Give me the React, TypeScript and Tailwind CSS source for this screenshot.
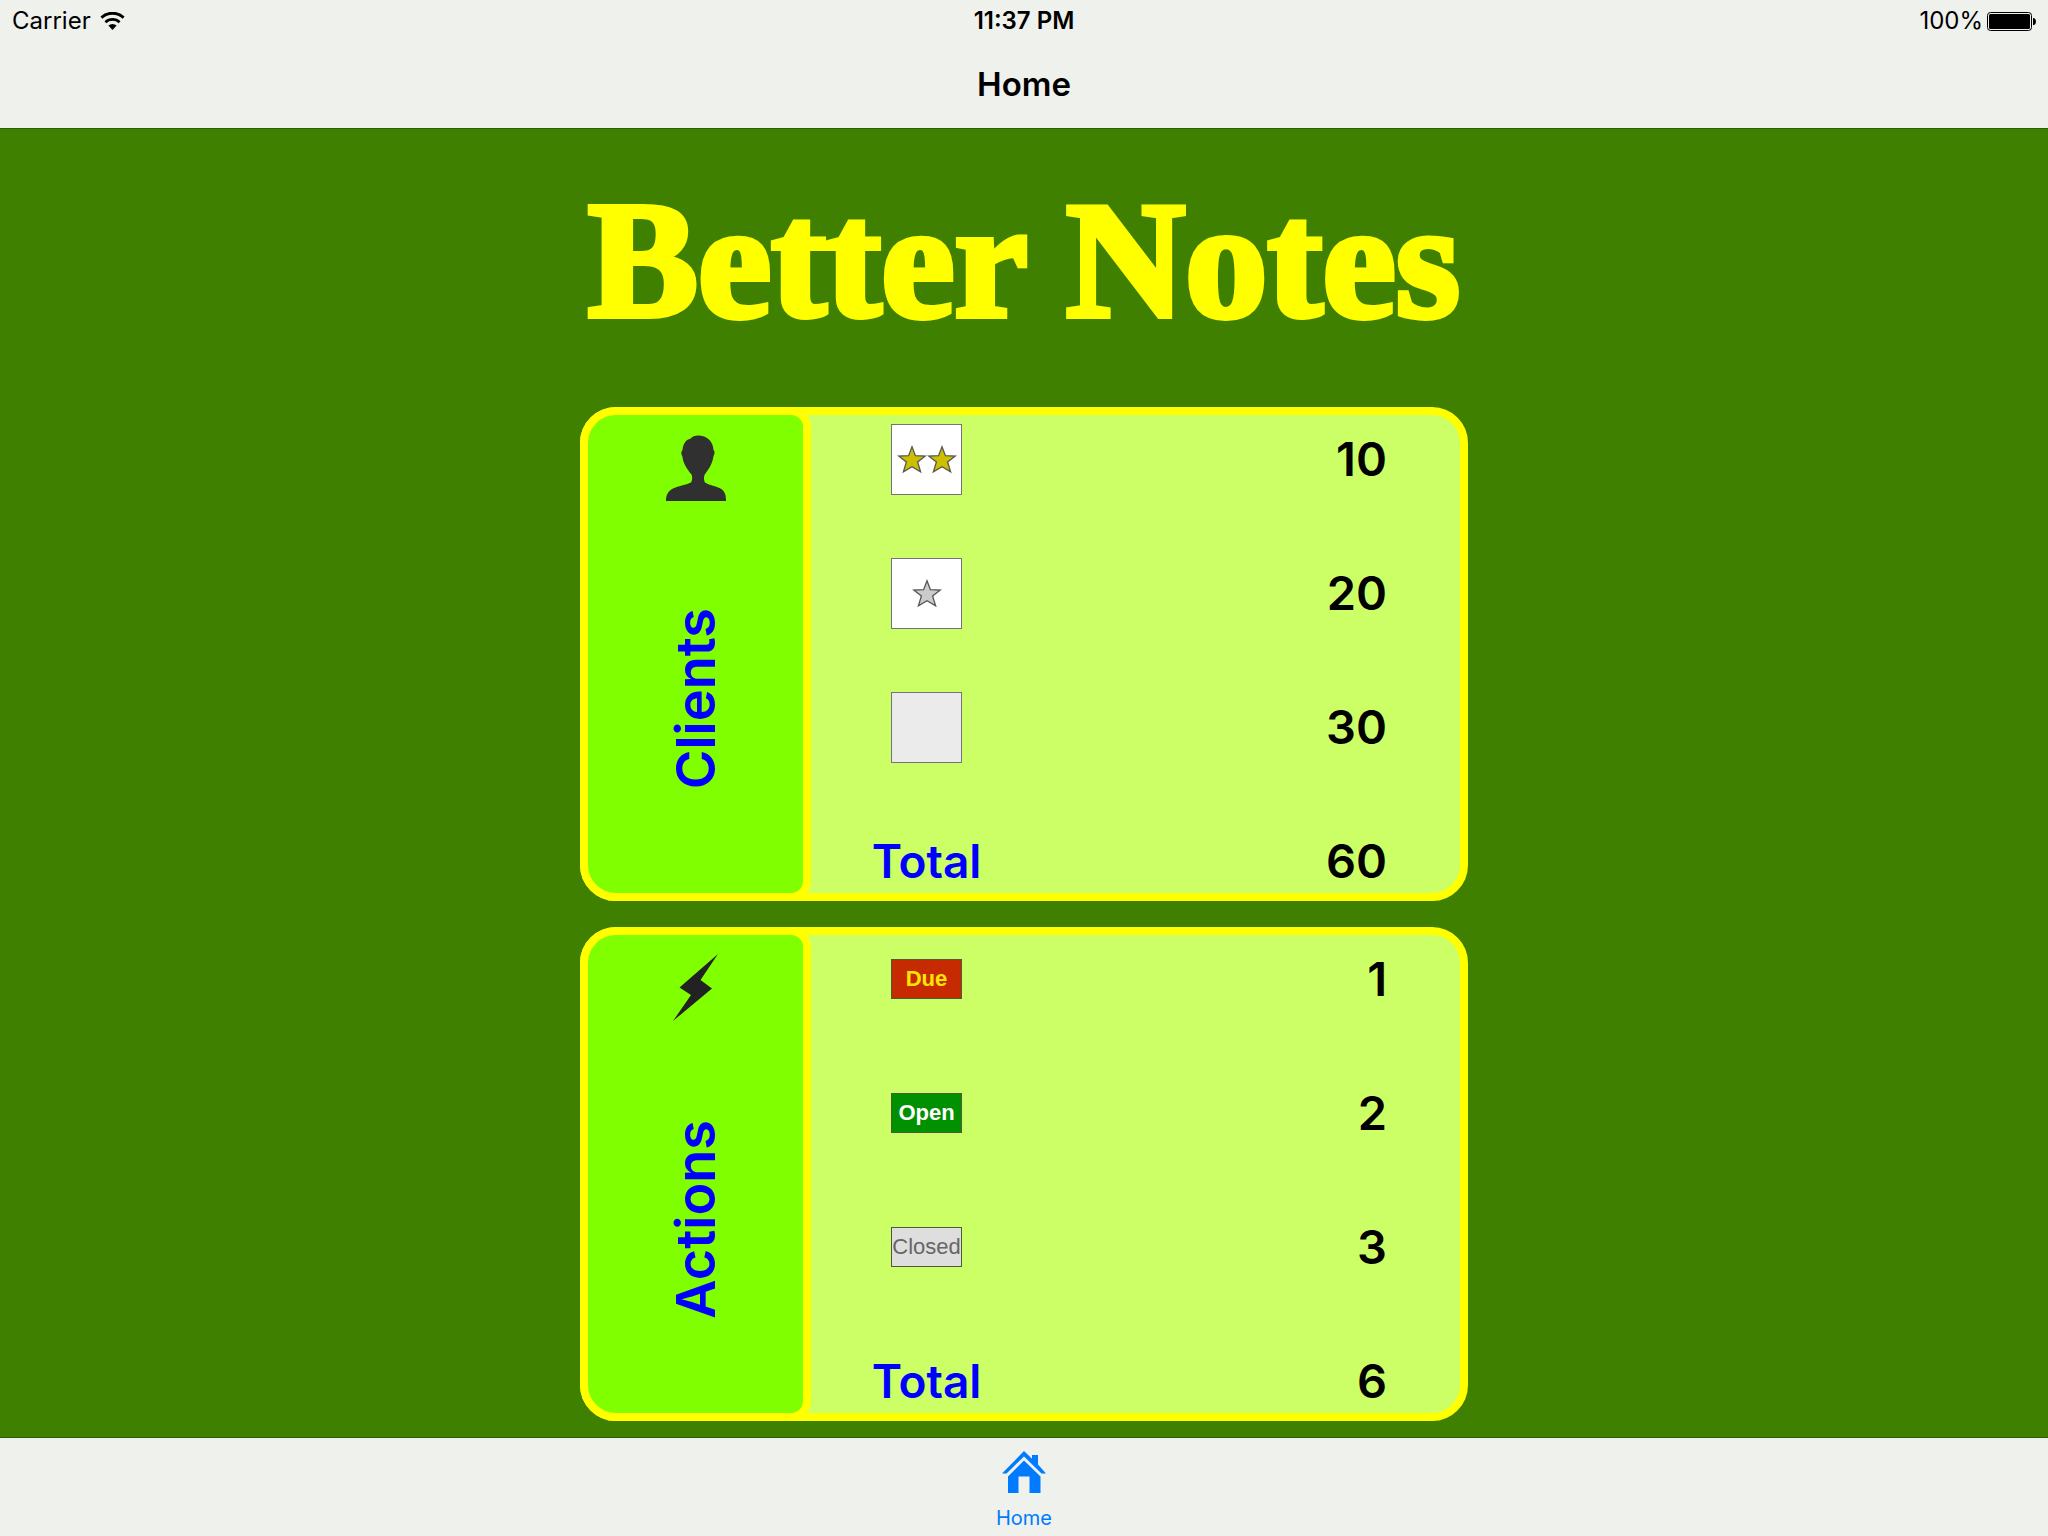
import type { ReactNode } from "react";

type Row = { label: string; mark: ReactNode; value: number };

function WifiIcon() {
  return (
    <svg viewBox="0 0 25 18" className="h-[18px] w-[25px]" aria-hidden="true">
      <path d="M1.4 5.6A16.2 16.2 0 0 1 23.6 5.6" fill="none" stroke="#000" strokeWidth="2.9" />
      <path d="M5.4 10.2A10.4 10.4 0 0 1 19.6 10.2" fill="none" stroke="#000" strokeWidth="2.7" />
      <path d="M8.4 13.5A6 6 0 0 1 16.6 13.5L12.5 18Z" />
    </svg>
  );
}

function BatteryIcon() {
  return (
    <svg viewBox="0 0 49 19" className="h-[19px] w-[49px]" aria-hidden="true">
      <rect x="0.5" y="0.5" width="44" height="18" rx="3" fill="none" stroke="#000" />
      <rect x="2" y="2" width="41" height="15" rx="1.5" />
      <path d="M46 6h1q2 1 2 3.5t-2 3.500h-1z" />
    </svg>
  );
}

function PersonIcon() {
  return (
    <svg viewBox="0 0 60 66" className="h-[66px] w-[60px]" fill="#303030" aria-hidden="true">
      <path d="M32 0.500C41 0.500 47 6 47.500 15C48.800 16 49 19 47.500 21C46.500 29 42 35 38.500 40C37.500 43 38 45.500 39 47.500C43 50 49 51 54.500 53.500C59 56 60 60 60 66H0C0 60 2 56 7 53.500C12 51 20 50 25 47.500C26.500 45 26.500 42 25.500 39.500C21 34 17 28 16.500 22C14.800 19 15 16.500 16.500 15C17 9 20 4.500 24 4C26 1.500 29 0.500 32 0.500Z" />
    </svg>
  );
}

function BoltIcon() {
  return (
    <svg viewBox="0 0 45 67" className="h-[67px] w-[45px]" fill="#222" aria-hidden="true">
      <path d="M45 0L27.500 26L39 34.500L0 67L18 41L6.500 33.500Z" />
    </svg>
  );
}

function HomeIcon() {
  return (
    <svg viewBox="0 0 44 42" className="h-[42px] w-11" fill="#007aff" aria-hidden="true">
      <path d="M22 0L30 7.800V4H36V13.600L44 22.500H39.500L22 5.500L4.500 22.500H0Z" />
      <path d="M22 9.500L38.500 25.500V42H27.500V25.500H16.500V42H6V25.500Z" />
    </svg>
  );
}

function Star({ fill }: { fill: string }) {
  return (
    <svg viewBox="0 0 30 29" className="h-[29px] w-[30px]" aria-hidden="true">
      <path
        d="M15 1.800L18.400 10.700L28.300 11.100L20.600 17L23.600 26.900L15 21.700L6.400 26.900L9.400 17L1.700 11.100L11.600 10.700Z"
        fill={fill}
        stroke="#555"
        strokeWidth="1.300"
      />
    </svg>
  );
}

function RatingBox({ stars = 0, tone }: { stars?: number; tone: "gold" | "silver" | "none" }) {
  return (
    <span
      className={`mx-auto flex h-[71px] w-[71px] items-center justify-center border border-[#77707f] ${
        tone === "none" ? "bg-[#ebebeb]" : "bg-white"
      }`}
    >
      {Array.from({ length: stars }, (_, i) => (
        <Star key={i} fill={tone === "gold" ? "#cdc000" : "#cbcbcb"} />
      ))}
    </span>
  );
}

function StatusBadge({ className, children }: { className: string; children: ReactNode }) {
  return (
    <span
      className={`mx-auto flex h-10 w-[71px] items-center justify-center border border-[#4f5a3c] font-['Liberation_Sans',sans-serif] text-[22px] leading-6 ${className}`}
    >
      {children}
    </span>
  );
}

const clients: Row[] = [
  { label: "Two stars", mark: <RatingBox stars={2} tone="gold" />, value: 10 },
  { label: "One star", mark: <RatingBox stars={1} tone="silver" />, value: 20 },
  { label: "No stars", mark: <RatingBox tone="none" />, value: 30 },
];

const actions: Row[] = [
  { label: "Due", mark: <StatusBadge className="bg-[#c62a00] font-bold text-[#ffe600]">Due</StatusBadge>, value: 1 },
  { label: "Open", mark: <StatusBadge className="bg-[#009000] font-bold text-white">Open</StatusBadge>, value: 2 },
  { label: "Closed", mark: <StatusBadge className="bg-[#dedede] text-[#666]">Closed</StatusBadge>, value: 3 },
];

function SummaryCard({ title, icon, rows, total }: { title: string; icon: ReactNode; rows: Row[]; total: number }) {
  return (
    <section className="flex rounded-[36px] border-8 border-[#ffff00] bg-[#ccff66]">
      <div className="-my-2 -ml-2 flex w-[231px] shrink-0 flex-col items-center rounded-l-[36px] rounded-r-[20px] border-8 border-[#ffff00] bg-[#80ff00]">
        <div className="flex h-[90px] items-end justify-center pb-1">{icon}</div>
        <div className="flex flex-1 items-center justify-center">
          <h2 className="rotate-180 text-[54px] leading-[68px] font-semibold text-[#0000ff] [writing-mode:vertical-rl]">
            {title}
          </h2>
        </div>
      </div>
      <table className="flex-1 border-collapse text-[47px] leading-16 font-semibold text-black">
        <tbody>
          {rows.map((row, i) => (
            <tr key={row.label} className={i === 0 ? "h-[111px] align-top" : "h-[134px] align-middle"}>
              <th scope="row" aria-label={row.label} className="w-[231px] p-0 font-normal">
                <div className={i === 0 ? "flex h-[88px] items-center" : "flex items-center"}>{row.mark}</div>
              </th>
              <td className="p-0 pr-[73px] text-right">
                <div className={i === 0 ? "flex h-[88px] items-center justify-end" : ""}>{row.value}</div>
              </td>
            </tr>
          ))}
          <tr className="h-[99px] align-bottom">
            <th scope="row" className="w-[231px] p-0 text-center text-[46px] font-semibold text-[#0000ff]">
              Total
            </th>
            <td className="p-0 pr-[73px] text-right">{total}</td>
          </tr>
        </tbody>
      </table>
    </section>
  );
}

export default function App() {
  return (
    <div className="flex min-h-screen flex-col bg-[#408000] font-[Inter,sans-serif] text-black">
      <header className="border-b border-[#2f5f00] bg-[#eff1ed]">
        <div className="grid h-[42px] grid-cols-3 items-center px-3 text-2xl">
          <div className="flex items-center gap-[9px]">
            Carrier
            <WifiIcon />
          </div>
          <time className="text-center font-semibold">11:37 PM</time>
          <div className="flex items-center justify-end gap-1">
            100%
            <BatteryIcon />
          </div>
        </div>
        <h1 className="flex h-[86px] items-center justify-center pb-0.5 text-[33px] leading-10 font-semibold">Home</h1>
      </header>

      <main className="flex flex-1 flex-col items-center px-4 pb-4">
        <p className="flex h-[278px] items-center justify-center pb-4 font-['Liberation_Serif',serif] text-[165px] leading-none font-bold whitespace-nowrap text-[#ffff00] [-webkit-text-stroke:6px_#ffff00]">
          Better Notes
        </p>
        <div className="flex w-full max-w-[888px] flex-col gap-[26px]">
          <SummaryCard title="Clients" icon={<PersonIcon />} rows={clients} total={60} />
          <SummaryCard title="Actions" icon={<BoltIcon />} rows={actions} total={6} />
        </div>
      </main>

      <nav className="flex h-[99px] justify-center border-t border-[#2f5f00] bg-[#eff1ed]">
        <a href="#home" aria-current="page" className="flex flex-col items-center gap-[13px] pt-[13px] text-xl leading-6 text-[#007aff]">
          <HomeIcon />
          Home
        </a>
      </nav>
    </div>
  );
}
